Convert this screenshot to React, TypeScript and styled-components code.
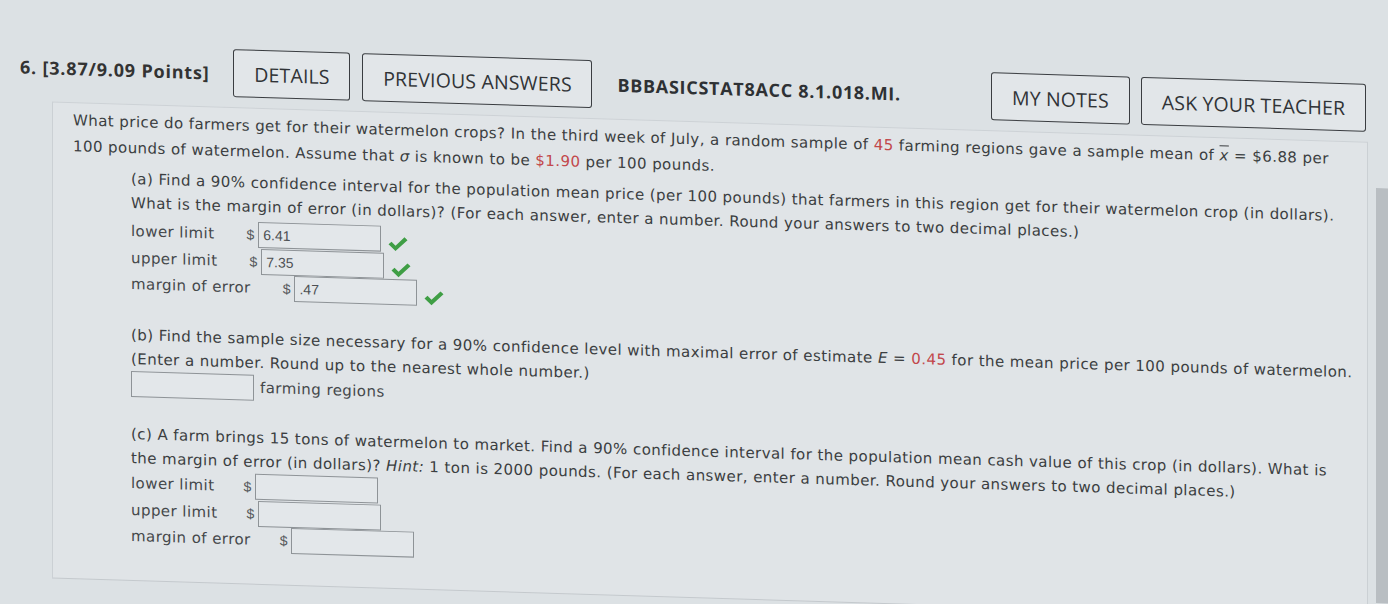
import React from "react";
import styled, { createGlobalStyle } from "styled-components";

const GlobalStyle = createGlobalStyle`
  html, body {
    margin: 0;
    padding: 0;
    background: #dce1e4;
    overflow: hidden;
  }
  * { box-sizing: border-box; }
`;

const Page = styled.div`
  width: 1388px;
  height: 604px;
  padding: 42px 0 0 20px;
  transform: skewY(1.75deg);
  transform-origin: 0 0;
  color: #3b3e41;
  font-family: "DejaVu Sans", Verdana, sans-serif;
`;

const Header = styled.div`
  display: flex;
  align-items: center;
  height: 48px;
  width: 1346px;
`;

const QNum = styled.div`
  font-family: "Open Sans", sans-serif;
  font-weight: 700;
  font-size: 18px;
  letter-spacing: 0.8px;
  color: #333;
  margin-right: 24px;
  white-space: nowrap;
`;

const HeaderButton = styled.div<{ $w: number; $ml?: number }>`
  display: flex;
  align-items: center;
  justify-content: center;
  width: ${(p) => p.$w}px;
  height: 48px;
  margin-left: ${(p) => p.$ml ?? 0}px;
  border: 1.5px solid #3a3d41;
  border-radius: 3px;
  font-family: "Open Sans", sans-serif;
  font-size: 19.5px;
  letter-spacing: 0.15px;
  color: #303336;
  background: #e2e6e9;
  white-space: nowrap;
`;

const Code = styled.div`
  font-family: "Open Sans", sans-serif;
  font-weight: 700;
  font-size: 18px;
  letter-spacing: 0.7px;
  color: #2e3134;
  margin-left: 25px;
  white-space: nowrap;
`;

const Spacer = styled.div`
  flex: 1;
`;

const BodyRow = styled.div`
  display: flex;
  align-items: flex-start;
  margin-top: 10px;
  margin-left: 32px;
`;

const Panel = styled.div`
  width: 1316px;
  border-top: 1px solid #cdd2d6;
  border-left: 1px solid #cbd0d4;
  border-right: 1px solid #cbd0d4;
  border-bottom: 1px solid #c4c9cd;
  background: #e0e4e7;
  padding: 4px 0 30px 20px;
`;

const ScrollThumb = styled.div`
  width: 12px;
  height: 415px;
  margin-top: 46px;
  margin-left: 8px;
  background: #b9bec2;
`;

const Para = styled.div<{ $lh?: number }>`
  font-size: 15px;
  letter-spacing: 0.43px;
  line-height: ${(p) => p.$lh ?? 24}px;
  white-space: nowrap;
`;

const Part = styled.div<{ $mt: number }>`
  margin-left: 58px;
  margin-top: ${(p) => p.$mt}px;
`;

const Fieldset = styled.div<{ $mt: number }>`
  margin-top: ${(p) => p.$mt}px;
`;

const Red = styled.span`
  color: #c2474b;
`;

const Ital = styled.span`
  font-style: italic;
`;

const XBar = styled.span`
  font-style: italic;
  text-decoration: overline;
`;

const Row = styled.div<{ $h?: number }>`
  display: flex;
  align-items: center;
  height: ${(p) => p.$h ?? 26.5}px;
  font-size: 15px;
  letter-spacing: 0.43px;
  color: #45484b;
  white-space: nowrap;
`;

const Label = styled.span<{ $gap: number }>`
  margin-right: ${(p) => p.$gap}px;
`;

const Dollar = styled.span`
  font-family: "Liberation Sans", Arial, sans-serif;
  font-size: 14px;
  letter-spacing: 0;
  color: #55585b;
  margin-right: 4px;
`;

const Input = styled.div`
  width: 123px;
  height: 26px;
  border: 1px solid #8e9397;
  background: #e3e7ea;
  display: flex;
  align-items: center;
  padding-left: 4px;
  font-family: "Liberation Sans", Arial, sans-serif;
  font-size: 14px;
  letter-spacing: 0;
  color: #4d5053;
`;

const UnitText = styled.span`
  margin-left: 6px;
  color: #45484b;
`;

const CheckWrap = styled.span`
  display: inline-flex;
  margin-left: 6px;
  margin-top: 9px;
`;

const Check = () => (
  <CheckWrap>
    <svg width="22" height="16" viewBox="0 0 22 16">
      <path
        d="M1.5 8.5 L4.5 5.8 L8.5 9.6 L17.5 1 L20.5 3.8 L8.5 15 Z"
        fill="#3f9e45"
      />
    </svg>
  </CheckWrap>
);

type Field = { label: string; value?: string; ok?: boolean };

const Fields = ({ items, gap, mt }: { items: Field[]; gap: number; mt: number }) => (
  <Fieldset $mt={mt}>
    {items.map((f) => (
      <Row key={f.label}>
        <Label $gap={gap}>{f.label}</Label>
        <Dollar>$</Dollar>
        <Input>{f.value}</Input>
        {f.ok && <Check />}
      </Row>
    ))}
  </Fieldset>
);

export default function App() {
  return (
    <>
      <GlobalStyle />
      <Page>
        <Header>
          <QNum>6. [3.87/9.09 Points]</QNum>
          <HeaderButton $w={117}>DETAILS</HeaderButton>
          <HeaderButton $w={230} $ml={12}>
            PREVIOUS ANSWERS
          </HeaderButton>
          <Code>BBBASICSTAT8ACC 8.1.018.MI.</Code>
          <Spacer />
          <HeaderButton $w={139}>MY NOTES</HeaderButton>
          <HeaderButton $w={225} $ml={11}>
            ASK YOUR TEACHER
          </HeaderButton>
        </Header>
        <BodyRow>
          <Panel>
            <Para $lh={26}>
              What price do farmers get for their watermelon crops? In the third week of July, a random
              sample of <Red>45</Red> farming regions gave a sample mean of <XBar>x</XBar> = $6.88 per
              <br />
              100 pounds of watermelon. Assume that <Ital>σ</Ital> is known to be <Red>$1.90</Red> per 100
              pounds.
            </Para>
            <Part $mt={6}>
              <Para>
                (a) Find a 90% confidence interval for the population mean price (per 100 pounds) that
                farmers in this region get for their watermelon crop (in dollars).
                <br />
                What is the margin of error (in dollars)? (For each answer, enter a number. Round your
                answers to two decimal places.)
              </Para>
              <Fields
                gap={32}
                mt={3}
                items={[
                  { label: "lower limit", value: "6.41", ok: true },
                  { label: "upper limit", value: "7.35", ok: true },
                  { label: "margin of error", value: ".47", ok: true },
                ]}
              />
            </Part>
            <Part $mt={25}>
              <Para>
                (b) Find the sample size necessary for a 90% confidence level with maximal error of
                estimate <Ital>E</Ital> = <Red>0.45</Red> for the mean price per 100 pounds of watermelon.
                <br />
                (Enter a number. Round up to the nearest whole number.)
              </Para>
              <Row>
                <Input />
                <UnitText>farming regions</UnitText>
              </Row>
            </Part>
            <Part $mt={25}>
              <Para>
                (c) A farm brings 15 tons of watermelon to market. Find a 90% confidence interval for the
                population mean cash value of this crop (in dollars). What is
                <br />
                the margin of error (in dollars)? <Ital>Hint:</Ital> 1 ton is 2000 pounds. (For each
                answer, enter a number. Round your answers to two decimal places.)
              </Para>
              <Fields
                gap={29}
                mt={0}
                items={[
                  { label: "lower limit" },
                  { label: "upper limit" },
                  { label: "margin of error" },
                ]}
              />
            </Part>
          </Panel>
          <ScrollThumb />
        </BodyRow>
      </Page>
    </>
  );
}
